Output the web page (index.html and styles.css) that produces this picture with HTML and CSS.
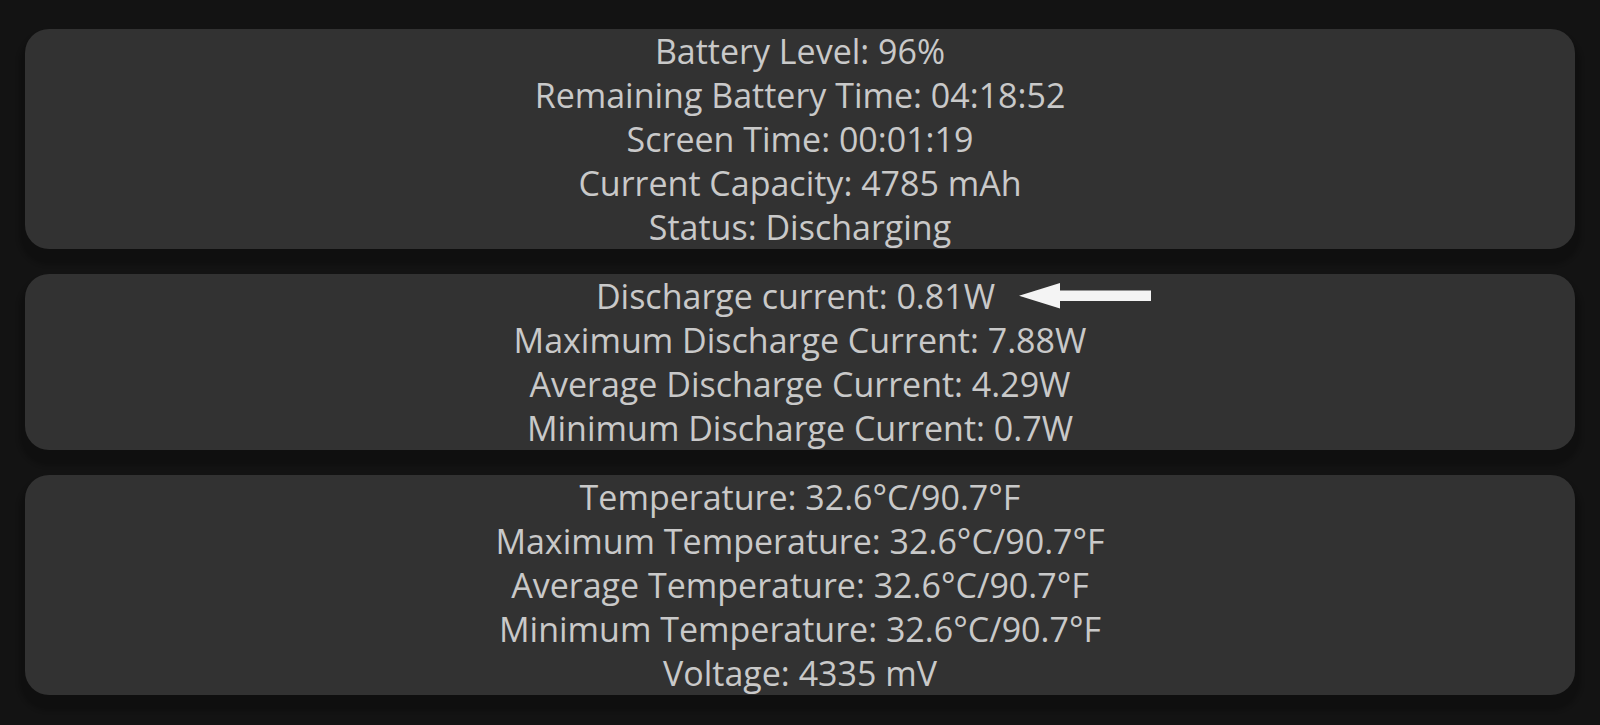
FILE: index.html
```html
<!DOCTYPE html>
<html lang="en">
<head>
<meta charset="utf-8">
<title>Battery Info</title>
<link rel="stylesheet" href="styles.css">
</head>
<body>
<main class="list">
  <section class="card">
    <p class="line">Battery Level: 96%</p>
    <p class="line">Remaining Battery Time: 04:18:52</p>
    <p class="line">Screen Time: 00:01:19</p>
    <p class="line">Current Capacity: 4785 mAh</p>
    <p class="line">Status: Discharging</p>
  </section>
  <section class="card">
    <p class="line line-arrow"><span>Discharge current: 0.81W</span><svg class="arrow" width="132" height="26" viewBox="0 0 132 26" aria-hidden="true"><path d="M0 12.7 L41 0 L41 7.4 L132 7.4 L132 18 L41 18 L41 25.4 Z" fill="#f4f4f4"/></svg></p>
    <p class="line">Maximum Discharge Current: 7.88W</p>
    <p class="line">Average Discharge Current: 4.29W</p>
    <p class="line">Minimum Discharge Current: 0.7W</p>
  </section>
  <section class="card">
    <p class="line">Temperature: 32.6°C/90.7°F</p>
    <p class="line">Maximum Temperature: 32.6°C/90.7°F</p>
    <p class="line">Average Temperature: 32.6°C/90.7°F</p>
    <p class="line">Minimum Temperature: 32.6°C/90.7°F</p>
    <p class="line">Voltage: 4335 mV</p>
  </section>
</main>
</body>
</html>
```

FILE: styles.css
```css
html, body {
  margin: 0;
  padding: 0;
  background: #131313;
  height: 100%;
}
body {
  font-family: "Open Sans", "Noto Sans", sans-serif;
  color: #c9c9c9;
  overflow: hidden;
}
.list {
  display: flex;
  flex-direction: column;
  gap: 25px;
  padding: 29px 25px 0 25px;
}
.card {
  background: #323232;
  border-radius: 24px;
  box-shadow: 0 10px 4px 6px rgba(0, 0, 0, 0.2);
  display: flex;
  flex-direction: column;
  align-items: center;
}
.line {
  margin: 0;
  font-size: 34px;
  line-height: 44px;
  height: 44px;
  white-space: nowrap;
  text-align: center;
}
.line-arrow {
  display: flex;
  align-items: center;
  margin-left: 147px;
}
.arrow {
  margin-left: 24px;
  flex: none;
}
```
